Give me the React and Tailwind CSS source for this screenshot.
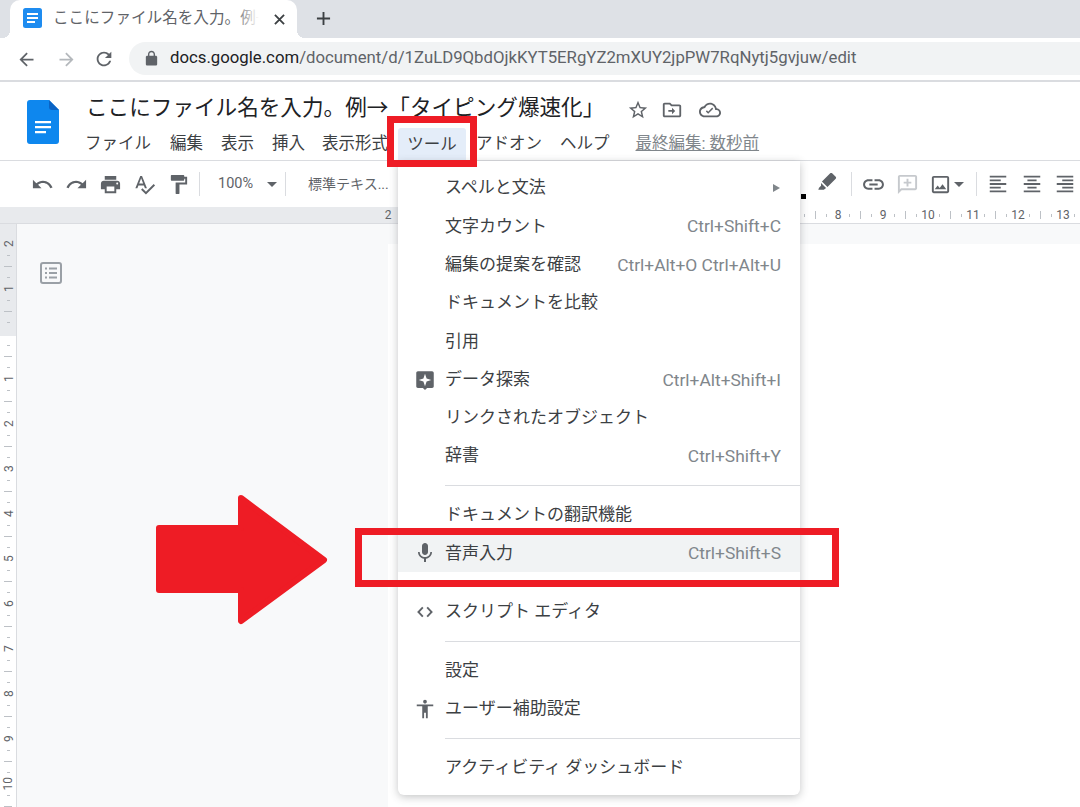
import React from "react";

const CJK = { fontFamily: 'Roboto, "Noto Sans CJK JP", sans-serif' };

const P = {
  undo: "M12.5 8c-2.65 0-5.05.99-6.9 2.6L2 7v9h9l-3.62-3.62c1.39-1.16 3.16-1.88 5.12-1.88 3.54 0 6.55 2.31 7.6 5.5l2.37-.78C21.08 11.03 17.15 8 12.5 8z",
  redo: "M18.4 10.6C16.55 8.99 14.15 8 11.5 8c-4.65 0-8.58 3.03-9.96 7.22L3.9 16c1.05-3.19 4.05-5.5 7.6-5.5 1.95 0 3.73.72 5.12 1.88L13 16h9V7l-3.6 3.6z",
  print: "M19 8H5c-1.66 0-3 1.34-3 3v6h4v4h12v-4h4v-6c0-1.66-1.34-3-3-3zm-3 11H8v-5h8v5zm3-7c-.55 0-1-.45-1-1s.45-1 1-1 1 .45 1 1-.45 1-1 1zm-1-9H6v4h12V3z",
  spell: "M12.45 16h2.09L9.43 3H7.57L2.46 16h2.09l1.12-3h5.64l1.14 3zm-6.02-5L8.5 5.48 10.57 11H6.43zm15.16.59l-8.09 8.09L9.83 16l-1.41 1.41 5.09 5.09L23 13l-1.41-1.41z",
  paint: "M18 4V3c0-.55-.45-1-1-1H5c-.55 0-1 .45-1 1v4c0 .55.45 1 1 1h12c.55 0 1-.45 1-1V6h1v4H9v11c0 .55.45 1 1 1h2c.55 0 1-.45 1-1v-9h8V4h-3z",
  star: "M22 9.24l-7.19-.62L12 2 9.19 8.63 2 9.24l5.46 4.73L5.82 21 12 17.27 18.18 21l-1.63-7.03L22 9.24zM12 15.4l-3.76 2.27 1-4.28-3.32-2.88 4.38-.38L12 6.1l1.71 4.04 4.38.38-3.32 2.88 1 4.28L12 15.4z",
  folder: "M20 6h-8l-2-2H4c-1.11 0-2 .89-2 2v12c0 1.1.9 2 2 2h16c1.1 0 2-.9 2-2V8c0-1.1-.9-2-2-2zm0 12H4V6h5.17l2 2H20v10zM12 14H8v-2h4V9.5l3.5 3.5-3.5 3.5z",
  cloud: "M19.35 10.04C18.67 6.59 15.64 4 12 4 9.11 4 6.6 5.64 5.35 8.04 2.34 8.36 0 10.91 0 14c0 3.31 2.69 6 6 6h13c2.76 0 5-2.24 5-5 0-2.64-2.05-4.78-4.65-4.96zM19 18H6c-2.21 0-4-1.79-4-4 0-2.05 1.53-3.76 3.56-3.97l1.07-.11.5-.95C8.08 7.14 9.94 6 12 6c2.62 0 4.88 1.86 5.39 4.43l.3 1.5 1.53.11c1.56.1 2.78 1.41 2.78 2.96 0 1.65-1.35 3-3 3zM10 16l-2.5-2.5 1.1-1.1L10 13.8l4.4-4.4 1.1 1.1z",
  pen: "M15.5 2.5c.6-.6 1.5-.6 2.1 0l3.9 3.9c.6.6.6 1.5 0 2.1L12.5 17.5 6.5 11.5zM5.5 13l5.5 5.5-2.5 2H2.5l.8-2.2L5.5 16z",
  link: "M3.9 12c0-1.71 1.39-3.1 3.1-3.1h4V7H7c-2.76 0-5 2.24-5 5s2.24 5 5 5h4v-1.9H7c-1.71 0-3.1-1.39-3.1-3.1zM8 13h8v-2H8v2zm9-6h-4v1.9h4c1.71 0 3.1 1.39 3.1 3.1s-1.39 3.1-3.1 3.1h-4V17h4c2.76 0 5-2.24 5-5s-2.24-5-5-5z",
  comment: "M20 2H4c-1.1 0-2 .9-2 2v18l4-4h14c1.1 0 2-.9 2-2V4c0-1.1-.9-2-2-2zm0 14H5.17L4 17.17V4h16v12zM13 6h-2v3H8v2h3v3h2v-3h3V9h-3z",
  image: "M19 5v14H5V5h14m0-2H5c-1.1 0-2 .9-2 2v14c0 1.1.9 2 2 2h14c1.1 0 2-.9 2-2V5c0-1.1-.9-2-2-2zm-4.86 8.86l-3 3.87L9 13.14 6 17h12l-3.86-5.14z",
  left: "M15 15H3v2h12v-2zm0-8H3v2h12V7zM3 13h18v-2H3v2zm0 8h18v-2H3v2zM3 3v2h18V3H3z",
  center: "M7 15v2h10v-2H7zm-4 6h18v-2H3v2zm0-8h18v-2H3v2zm4-6v2h10V7H7zM3 3v2h18V3H3z",
  right: "M3 21h18v-2H3v2zm6-4h12v-2H9v2zm-6-4h18v-2H3v2zm6-4h12V7H9v2zM3 3v2h18V3H3z",
  back: "M20 11H7.83l5.59-5.59L12 4l-8 8 8 8 1.41-1.41L7.83 13H20v-2z",
  forward: "M12 4l-1.41 1.41L16.17 11H4v2h12.17l-5.58 5.59L12 20l8-8z",
  reload: "M17.65 6.35C16.2 4.9 14.21 4 12 4c-4.42 0-7.99 3.58-7.99 8s3.57 8 7.99 8c3.73 0 6.84-2.55 7.73-6h-2.08c-.82 2.33-3.04 4-5.65 4-3.31 0-6-2.69-6-6s2.69-6 6-6c1.66 0 3.14.69 4.22 1.78L13 11h7V4l-2.35 2.35z",
  lock: "M18 8h-1V6c0-2.76-2.24-5-5-5S7 3.24 7 6v2H6c-1.1 0-2 .9-2 2v10c0 1.1.9 2 2 2h12c1.1 0 2-.9 2-2V10c0-1.1-.9-2-2-2zM9 6c0-1.66 1.34-3 3-3s3 1.34 3 3v2H9V6z",
  mic: "M12 14c1.66 0 3-1.34 3-3V5c0-1.66-1.34-3-3-3S9 3.34 9 5v6c0 1.66 1.34 3 3 3zm5.3-3c0 3-2.54 5.1-5.3 5.1S6.7 14 6.7 11H5c0 3.41 2.72 6.23 6 6.72V21h2v-3.28c3.28-.48 6-3.3 6-6.72h-1.7z",
  code: "M10 17.2L5 12l5-5.2L8.2 5 1.5 12l6.7 7zM14 17.2l5-5.2-5-5.2L15.8 5l6.7 7-6.7 7z",
  access: "M12 2c1.1 0 2 .9 2 2s-.9 2-2 2-2-.9-2-2 .9-2 2-2zm9 7h-6v13h-2v-6h-2v6H9V9H3V7h18v2z",
  explore: "M3.5 1.5h17c1.1 0 2 .9 2 2v16c0 1.1-.9 2-2 2h-6L12 24l-2.5-2.5h-6c-1.1 0-2-.9-2-2v-16c0-1.1.9-2 2-2zM12 4.5l-1.9 5.6-5.6 1.9 5.6 1.9L12 19.5l1.9-5.6 5.6-1.9-5.6-1.9z",
};

function Icon({ d, size = 24, className = "", rule }) {
  return (
    <svg width={size} height={size} viewBox="0 0 24 24" className={"shrink-0 fill-current " + className}>
      <path d={d} fillRule={rule || "nonzero"} />
    </svg>
  );
}

function Tool({ d, size = 23, w = "w-[34px]", color = "text-[#5f6368]", className = "" }) {
  return (
    <div className={"flex justify-center items-center shrink-0 " + w + " " + color + " " + className}>
      <Icon d={d} size={size} />
    </div>
  );
}

function Sep({ className = "" }) {
  return <div className={"w-px h-[24px] bg-[#dadce0] shrink-0 " + className} />;
}

function Row({ label, shortcut, icon, active, arrow, iconSize = 20, rule }) {
  return (
    <div className={"flex items-center h-[38.3px] pl-[15px] pr-[19px] " + (active ? "bg-[#f1f3f4]" : "")}>
      <div className="w-[24px] flex justify-center text-[#5f6368]">
        {icon && <Icon d={icon} size={iconSize} rule={rule} />}
      </div>
      <span className="ml-[8px] text-[17px] text-[#3c4043] whitespace-nowrap">{label}</span>
      <span className="flex-1" />
      {shortcut && <span className="text-[17.4px] text-[#80868b] whitespace-nowrap">{shortcut}</span>}
      {arrow && <span className="w-0 h-0 border-y-[4px] border-y-transparent border-l-[7px] border-l-[#80868b] mr-[1px]" />}
    </div>
  );
}

function Divider() {
  return (
    <div className="h-[20.5px] flex items-center pl-[47px]">
      <div className="h-px w-full bg-[#dadce0]" />
    </div>
  );
}

function RulerV() {
  const cells = ["2", "1", "", "1", "2", "3", "4", "5", "6", "7", "8", "9", "10"];
  return (
    <div className="w-[17px] shrink-0 border-r border-[#dadce0] overflow-hidden bg-[linear-gradient(#e8eaed_112px,#ffffff_112px)]">
      <div className="h-[14.4px]" />
      {cells.map((c, i) => (
        <div key={i} className="h-[45px] flex flex-col items-center">
          <div className="h-[11.25px] flex items-center justify-center text-[12px] leading-none text-[#5f6368] -rotate-90 whitespace-nowrap">{c}</div>
          <div className="h-[11.25px] flex items-center"><div className="w-[3px] h-px bg-[#bdc1c6]" /></div>
          <div className="h-[11.25px] flex items-center"><div className="w-[8px] h-px bg-[#bdc1c6]" /></div>
          <div className="h-[11.25px] flex items-center"><div className="w-[3px] h-px bg-[#bdc1c6]" /></div>
        </div>
      ))}
    </div>
  );
}

function RulerH() {
  const cells = ["2", "", "", "", "", "", "", "", "", "", "8", "9", "10", "11", "12", "13", ""];
  return (
    <div className="h-[17px] shrink-0 flex border-b border-[#dadce0] overflow-hidden bg-[linear-gradient(to_right,#e8eaed_478px,#ffffff_478px)]">
      <div className="w-[382.4px] shrink-0" />
      {cells.map((c, i) => (
        <div key={i} className="w-[45px] shrink-0 flex items-center">
          <div className="w-[11.25px] flex justify-center text-[12px] leading-none text-[#5f6368] whitespace-nowrap">{c}</div>
          <div className="w-[11.25px] flex justify-center"><div className="w-px h-[3px] bg-[#bdc1c6]" /></div>
          <div className="w-[11.25px] flex justify-center"><div className="w-px h-[8px] bg-[#bdc1c6]" /></div>
          <div className="w-[11.25px] flex justify-center"><div className="w-px h-[3px] bg-[#bdc1c6]" /></div>
        </div>
      ))}
    </div>
  );
}

export default function App() {
  return (
    <div className="relative w-[1080px] h-[807px] overflow-hidden bg-white flex flex-col" style={CJK}>
      {/* Tab strip */}
      <div className="h-[38px] shrink-0 bg-[#dee1e6] flex items-end pl-[10px]">
        <div className="relative w-[287px] h-[38px] bg-white rounded-t-[10px] flex items-center pl-[12px]">
          <span className="absolute -left-[8px] bottom-0 w-[8px] h-[8px] bg-[radial-gradient(circle_at_0_0,transparent_8px,#ffffff_8px)]" />
          <span className="absolute -right-[8px] bottom-0 w-[8px] h-[8px] bg-[radial-gradient(circle_at_100%_0,transparent_8px,#ffffff_8px)]" />
          <svg width="21" height="21" viewBox="0 0 21 21" className="shrink-0 -mt-[1px]">
            <rect width="19" height="20" x="1" y="0" rx="2.5" fill="#1e8cf0" />
            <path d="M5 5h11v2H5zM5 9h11v2H5zM5 13h8v2H5z" fill="#fff" />
          </svg>
          <div className="relative ml-[10px] w-[206px] overflow-hidden whitespace-nowrap text-[15.6px] text-[#5f6368]">
            ここにファイル名を入力。例→「タイピング爆速化」
            <span className="absolute right-0 top-0 bottom-0 w-[24px] bg-gradient-to-r from-transparent to-white" />
          </div>
          <svg width="11" height="11" viewBox="0 0 12 12" className="ml-[15px] shrink-0 stroke-[#3c4043] stroke-2">
            <path d="M1 1l10 10M11 1L1 11" />
          </svg>
        </div>
        <svg width="15" height="15" viewBox="0 0 16 16" className="ml-[19px] mb-[12px] shrink-0 stroke-[#3c4043] stroke-2">
          <path d="M8 1v14M1 8h14" />
        </svg>
      </div>

      {/* Address bar */}
      <div className="h-[44px] shrink-0 flex items-center border-b-2 border-[#dadce0]">
        <div className="w-[129px] shrink-0 flex items-center">
          <Tool d={P.back} size={21} w="w-[52px]" />
          <Tool d={P.forward} size={21} w="w-[28px]" color="text-[#b4b8bc]" />
          <Tool d={P.reload} size={22} w="w-[47px]" />
        </div>
        <div className="flex-1 h-[33px] -mt-[2px] rounded-l-full bg-[#f1f3f4] flex items-center pl-[14px] text-[16.75px] whitespace-nowrap">
          <Icon d={P.lock} size={17} className="text-[#5f6368]" />
          <span className="ml-[10px] text-[#202124]">docs.google.com</span>
          <span className="text-[#5f6368]">/document/d/1ZuLD9QbdOjkKYT5ERgYZ2mXUY2jpPW7RqNytj5gvjuw/edit</span>
        </div>
      </div>

      {/* Docs header */}
      <div className="h-[78px] shrink-0 flex">
        <div className="w-[88px] shrink-0 pl-[27px] pt-[18px]">
          <svg width="32" height="44" viewBox="0 0 32 44">
            <path d="M3 0h19l10 10v31a3 3 0 0 1-3 3H3a3 3 0 0 1-3-3V3a3 3 0 0 1 3-3z" fill="#0e87ee" />
            <path d="M22 0l10 10h-7a3 3 0 0 1-3-3z" fill="#0a63c4" />
            <path d="M8 21h16v2.2H8zM8 26h16v2.2H8zM8 31h11v2.2H8z" fill="#fff" />
          </svg>
        </div>
        <div className="flex-1 flex flex-col">
          <div className="h-[46px] -ml-[2px] flex items-end">
            <span className="text-[21.6px] leading-[36px] mb-[2px] text-[#202124] whitespace-nowrap">ここにファイル名を入力。例→「タイピング爆速化」</span>
            <div className="ml-[23px] mb-[7px] flex items-center text-[#5f6368]">
              <Icon d={P.star} size={22} />
              <Icon d={P.folder} size={22} className="ml-[12px]" />
              <Icon d={P.cloud} size={22} className="ml-[16px]" />
            </div>
          </div>
          <div className="h-[32px] -ml-[3px] flex items-center text-[16.5px] text-[#3c4043] whitespace-nowrap">
            <span>ファイル</span>
            <span className="ml-[19px]">編集</span>
            <span className="ml-[18px]">表示</span>
            <span className="ml-[18px]">挿入</span>
            <span className="ml-[17px]">表示形式</span>
            <span className="ml-[10px] h-[34px] mt-[2px] w-[68px] rounded-t-[3px] bg-[#e4edf9] flex items-center justify-center">ツール</span>
            <span className="ml-[10px]">アドオン</span>
            <span className="ml-[18px]">ヘルプ</span>
            <span className="ml-[26px] text-[#80868b] underline">最終編集: 数秒前</span>
          </div>
        </div>
      </div>

      {/* Toolbar */}
      <div className="h-[47px] shrink-0 flex items-center border-t border-[#dadce0] pl-[25px]">
        <Tool d={P.undo} />
        <Tool d={P.redo} />
        <Tool d={P.print} />
        <Tool d={P.spell} />
        <Tool d={P.paint} />
        <Sep className="ml-[4px]" />
        <span className="ml-[18px] text-[14.5px] text-[#5f6368]">100%</span>
        <span className="ml-[14px] w-0 h-0 border-x-[5px] border-x-transparent border-t-[5px] border-t-[#5f6368]" />
        <Sep className="ml-[8px]" />
        <span className="ml-[22px] text-[14px] text-[#5f6368] whitespace-nowrap">標準テキス...</span>
        <span className="flex-1" />
        <Tool d={P.pen} size={22} w="w-[28px]" className="-mt-[4px]" />
        <Sep className="ml-[10px]" />
        <Tool d={P.link} size={25} w="w-[32px]" className="ml-[5px]" />
        <Tool d={P.comment} size={23} w="w-[36px]" color="text-[#c6c9cd]" />
        <Tool d={P.image} size={23} w="w-[30px]" />
        <span className="-ml-[1px] w-0 h-0 border-x-[5px] border-x-transparent border-t-[5px] border-t-[#5f6368]" />
        <Sep className="ml-[12px]" />
        <Tool d={P.left} size={22} w="w-[42px]" />
        <Tool d={P.center} size={22} w="w-[26px]" />
        <Tool d={P.right} size={22} w="w-[30px]" className="ml-[5px]" />
      </div>

      <RulerH />

      {/* Canvas */}
      <div className="flex-1 min-h-0 flex bg-[#f8f9fa]">
        <RulerV />
        <div className="flex-1 flex">
          <div className="w-[371px] shrink-0 pl-[22px] pt-[37px]">
            <svg width="24" height="24" viewBox="0 0 24 24" className="text-[#9aa0a6]">
              <rect x="2" y="2" width="20" height="20" rx="2" fill="none" stroke="currentColor" strokeWidth="2" />
              <path d="M6 6.5h2v2H6zM10 6.5h8v2h-8zM6 11h2v2H6zM10 11h8v2h-8zM6 15.5h2v2H6zM10 15.5h8v2h-8z" fill="currentColor" />
            </svg>
          </div>
          <div className="flex-1 mt-[20px] bg-white" />
        </div>
      </div>

      {/* Tools menu */}
      <div className="absolute left-[398px] top-[161px] w-[402px] h-[634px] bg-white rounded-b-[6px] shadow-[0_2px_8px_rgba(60,64,67,0.3)] pt-[8px]">
        <Row label="スペルと文法" arrow />
        <Row label="文字カウント" shortcut="Ctrl+Shift+C" />
        <Row label="編集の提案を確認" shortcut="Ctrl+Alt+O Ctrl+Alt+U" />
        <Row label="ドキュメントを比較" />
        <Row label="引用" />
        <Row label="データ探索" shortcut="Ctrl+Alt+Shift+I" icon={P.explore} rule="evenodd" />
        <Row label="リンクされたオブジェクト" />
        <Row label="辞書" shortcut="Ctrl+Shift+Y" />
        <Divider />
        <Row label="ドキュメントの翻訳機能" />
        <Row label="音声入力" shortcut="Ctrl+Shift+S" icon={P.mic} active iconSize={24} />
        <Divider />
        <Row label="スクリプト エディタ" icon={P.code} iconSize={18} />
        <Divider />
        <Row label="設定" />
        <Row label="ユーザー補助設定" icon={P.access} iconSize={22} />
        <Divider />
        <Row label="アクティビティ ダッシュボード" />
      </div>
      <div className="absolute left-[801px] top-[194px] w-[5px] h-[5px] bg-black" />

      {/* Red annotations */}
      <div className="absolute left-[387px] top-[116px] w-[90px] h-[51px] border-[7px] border-[#ee1c25]" />
      <div className="absolute left-[355px] top-[528px] w-[484px] h-[59px] border-[7px] border-[#ee1c25]" />
      <svg width="180" height="136" viewBox="0 0 180 136" className="absolute left-[152px] top-[492px]">
        <path d="M7 36h82V6l83 62-83 61V98H7z" fill="#ee1c25" stroke="#ee1c25" strokeWidth="6" strokeLinejoin="round" />
      </svg>
    </div>
  );
}
